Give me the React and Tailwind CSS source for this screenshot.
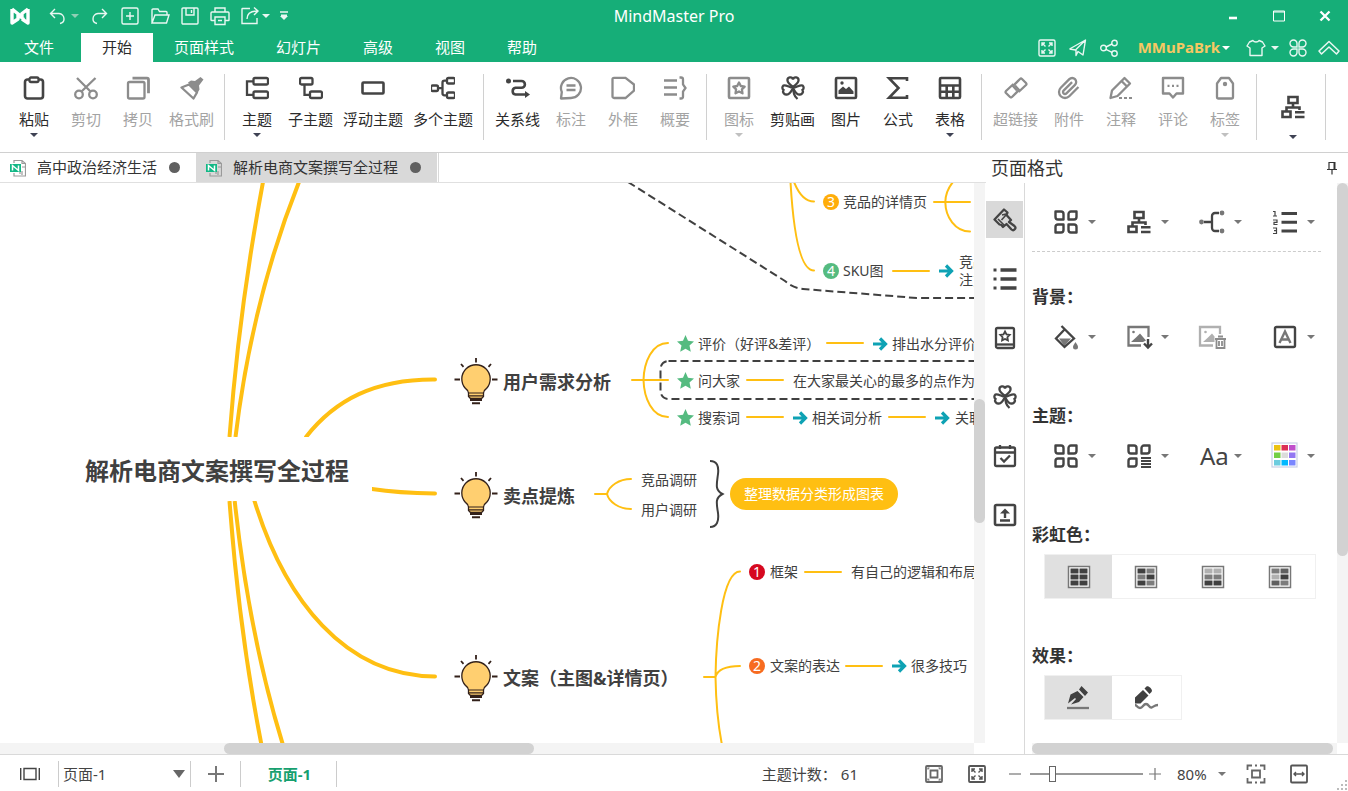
import React, { useState } from "react";

const Svg = ({ w = 24, h = 24, sw = 2.3, className = "", children }) => (
  <svg
    width={w}
    height={h}
    viewBox={`0 0 ${w} ${h}`}
    fill="none"
    stroke="currentColor"
    strokeWidth={sw}
    className={`shrink-0 ${className}`}
    aria-hidden="true"
  >
    {children}
  </svg>
);

const Caret = ({ className = "" }) => (
  <svg width="8" height="4" viewBox="0 0 8 4" className={`shrink-0 ${className}`} aria-hidden="true">
    <path d="M0 0h8L4 4z" fill="currentColor" />
  </svg>
);

const CLOVER = (
  <>
    <path d="M12 11C8 8 6.500 6.500 6.500 4.500A2.800 2.800 0 0 1 12 3.500A2.800 2.800 0 0 1 17.500 4.500C17.500 6.500 16 8 12 11Z" />
    <path d="M12 12C8 11 4.500 8.500 2.500 9.500A2.800 2.800 0 0 0 2.500 14A3 3 0 0 0 5.500 18.500C8 19 10 16 12 12Z" />
    <path d="M12 12C16 11 19.500 8.500 21.500 9.500A2.800 2.800 0 0 1 21.500 14A3 3 0 0 1 18.500 18.500C16 19 14 16 12 12Z" />
    <path d="M12 11C12.500 17 13 20 16.500 23" />
  </>
);

const STAR = "M12 7.500l1.500 2.900 3.200.500-2.300 2.300.500 3.200-2.900-1.500-2.900 1.500.500-3.200-2.300-2.300 3.200-.500z";

const PETALS = (
  <g strokeLinejoin="round" strokeWidth="2.400">
    <path d="M1.500 1.500h5.500a2.500 2.500 0 0 1 2.500 2.500v5.500h-5.500a2.500 2.500 0 0 1-2.500-2.500z" />
    <path d="M22.500 1.500h-5.500a2.500 2.500 0 0 0-2.500 2.500v5.500h5.500a2.500 2.500 0 0 0 2.500-2.500z" />
    <path d="M1.500 22.500h5.500a2.500 2.500 0 0 0 2.500-2.500v-5.500h-5.500a2.500 2.500 0 0 0-2.500 2.500z" />
  </g>
);

const FOUR_PETALS = (
  <>
    {PETALS}
    <path
      d="M22.500 22.500h-5.500a2.500 2.500 0 0 1-2.500-2.500v-5.500h5.500a2.500 2.500 0 0 1 2.500 2.500z"
      strokeLinejoin="round"
      strokeWidth="2.400"
    />
  </>
);

const LAYOUT = (
  <path
    d="M7.500 2h9v6h-9zM12 8v4M5.500 16v-3.500h13V15M1.500 16.500h8v5.500h-8zM14 17.300h9.500M14 22h9.500"
    strokeWidth="2.600"
  />
);

const icons = {
  paste: (
    <>
      <rect x="3" y="3.500" width="18" height="19" rx="2.500" strokeWidth="2.600" />
      <rect x="7.500" y="1.500" width="9" height="4.500" rx="1.500" fill="white" />
    </>
  ),
  cut: (
    <>
      <circle cx="5" cy="18.500" r="3.800" />
      <circle cx="19" cy="18.500" r="3.800" />
      <path d="M3 2l13.500 13.500M21.500 2L7.500 15.500" />
    </>
  ),
  copy: (
    <>
      <rect x="2" y="6" width="16.500" height="16.500" rx="1.500" />
      <path d="M6.500 2.200H21a1.500 1.500 0 0 1 1.500 1.500v13.500" strokeWidth="2.800" />
    </>
  ),
  painter: (
    <>
      <path d="M9 8.500l8 8-3.500 6L1.500 11.500z" strokeLinejoin="round" />
      <path d="M8 6.500l3-2 4 .500 5.500-4 3 2.500-4.500 6 .5 4-2 3.500z" fill="currentColor" stroke="none" />
    </>
  ),
  topic: (
    <>
      <rect x="8.500" y="2" width="14.500" height="6.500" rx="1.500" />
      <rect x="8.500" y="15.500" width="14.500" height="6.500" rx="1.500" />
      <path d="M8.500 5.300H2v13.500h6.500" />
    </>
  ),
  subtopic: (
    <>
      <rect x="1" y="2" width="12.500" height="6.500" rx="1.500" />
      <rect x="11" y="15.500" width="12" height="6.500" rx="1.500" />
      <path d="M5.500 8.500v10.300H11" />
    </>
  ),
  floating: <rect x="1.500" y="6.500" width="21" height="11" rx="1" strokeWidth="2.600" />,
  multi: (
    <>
      <rect x="0" y="9.500" width="7" height="5.500" rx="1.500" />
      <rect x="16" y="2" width="8" height="5.500" rx="1.500" />
      <rect x="16" y="16.500" width="8" height="5.500" rx="1.500" />
      <path d="M7 12.200h4.500M16 4.700h-2.500a2 2 0 0 0-2 2v10.600a2 2 0 0 0 2 2H16" />
    </>
  ),
  relation: (
    <>
      <circle cx="2.500" cy="5" r="2.500" fill="currentColor" stroke="none" />
      <path d="M7 5h8.500a3.200 3.200 0 0 1 0 6.800H9.500a3.400 3.400 0 0 0 0 6.700H19" strokeWidth="2.600" />
      <path d="M19 15l5 3.500-5 3.500z" fill="currentColor" stroke="none" />
    </>
  ),
  callout: (
    <>
      <path d="M2 22.500l.800-6.500A10 10 0 1 1 12 22z" strokeLinejoin="round" />
      <path d="M7.500 9.500h9M7.500 14h9" />
    </>
  ),
  boundary: <path d="M3 1.800h11.500L23 8.500v6L14.500 22H3a1.500 1.500 0 0 1-1.500-1.500v-17A1.500 1.500 0 0 1 3 1.800z" />,
  summary: (
    <>
      <path d="M1 4.500h13M1 11.500h13M1 18.500h13" />
      <path d="M16.500 1.500h1.500a2 2 0 0 1 2 2v5l2.500 3.500-2.500 3.500v5a2 2 0 0 1-2 2h-1.500" />
    </>
  ),
  mark: (
    <>
      <rect x="2" y="2" width="20" height="20" rx="1" strokeWidth="2.600" />
      <path d="M12 6.500l1.800 3.500 3.900.600-2.800 2.800.600 3.900L12 15.500l-3.500 1.800.600-3.900-2.800-2.800 3.900-.600z" strokeLinejoin="round" />
    </>
  ),
  clipart: CLOVER,
  image: (
    <>
      <rect x="2" y="2" width="20" height="20" rx="1" strokeWidth="2.600" />
      <path d="M4.500 18v-3.500l4.500-4 3 2.500 3-2.500 4.500 5V18z" fill="currentColor" stroke="none" />
      <circle cx="8" cy="7" r="1.700" fill="currentColor" stroke="none" />
    </>
  ),
  formula: <path d="M21 5V2.200H3L12.500 12 3 21.800h18V19" strokeWidth="2.600" />,
  table: (
    <path d="M3 2h18a1 1 0 0 1 1 1v18a1 1 0 0 1-1 1H3a1 1 0 0 1-1-1V3a1 1 0 0 1 1-1zM2 9.500h20M2 15.700h20M8.700 9.500V22M15.300 9.500V22" strokeWidth="2.600" />
  ),
  link: (
    <>
      <path d="M14.500 16l7.500-7a1.500 1.500 0 0 0 0-2l-4-4a1.500 1.500 0 0 0-2 0L9 10l4 4.500" />
      <path d="M9.500 8L2 15a1.500 1.500 0 0 0 0 2l4 4a1.500 1.500 0 0 0 2 0l7-7-4-4.500" />
    </>
  ),
  attach: (
    <path d="M21.440 11.050l-9.190 9.190a6 6 0 0 1-8.490-8.490l8.570-8.570A4 4 0 1 1 18 8.840l-8.590 8.570a2 2 0 0 1-2.830-2.830l8.490-8.480" />
  ),
  note: (
    <>
      <path d="M1.500 22l1.500-7.500L15.500 2l5.500 5.500L8.500 20z" strokeLinejoin="round" />
      <path d="M12.500 5l5.500 5.500" />
      <path d="M10 22h3M15 22h3M20 22h3" strokeWidth="2.200" />
    </>
  ),
  comment: (
    <>
      <path d="M2 2h20v15.500h-6.500L12 21.500l-3.500-4H2z" strokeLinejoin="round" strokeWidth="2.400" />
      <path d="M6.500 9.800h2M11 9.800h2M15.500 9.800h2" strokeWidth="2.200" />
    </>
  ),
  tag: (
    <>
      <path d="M4 7.500L8 2h8l4 5.500V21a1.500 1.500 0 0 1-1.500 1.500h-13A1.500 1.500 0 0 1 4 21z" strokeLinejoin="round" />
      <circle cx="12" cy="8" r="2.200" fill="currentColor" stroke="none" />
    </>
  ),
};

const ribbonGroups = [
  [
    { label: "粘贴", icon: "paste", caret: true },
    { label: "剪切", icon: "cut", off: true },
    { label: "拷贝", icon: "copy", off: true },
    { label: "格式刷", icon: "painter", off: true },
  ],
  [
    { label: "主题", icon: "topic", caret: true },
    { label: "子主题", icon: "subtopic" },
    { label: "浮动主题", icon: "floating" },
    { label: "多个主题", icon: "multi" },
  ],
  [
    { label: "关系线", icon: "relation" },
    { label: "标注", icon: "callout", off: true },
    { label: "外框", icon: "boundary", off: true },
    { label: "概要", icon: "summary", off: true },
  ],
  [
    { label: "图标", icon: "mark", caret: true, off: true },
    { label: "剪贴画", icon: "clipart" },
    { label: "图片", icon: "image" },
    { label: "公式", icon: "formula" },
    { label: "表格", icon: "table", caret: true },
  ],
  [
    { label: "超链接", icon: "link", off: true },
    { label: "附件", icon: "attach", off: true },
    { label: "注释", icon: "note", off: true },
    { label: "评论", icon: "comment", off: true },
    { label: "标签", icon: "tag", caret: true, off: true },
  ],
];

const cellWidth = { 2: "w-[52px]", 3: "w-[55px]", 4: "w-[70px]" };

const RibbonButton = ({ label, icon, caret, off }) => (
  <button
    disabled={off}
    className={`flex flex-col items-center pt-[14px] ${cellWidth[label.length]} ${
      off ? "text-[#8c8c8c]" : "text-[#444]"
    }`}
  >
    <Svg>{icons[icon]}</Svg>
    <span className={`mt-[9px] text-[15px] leading-5 whitespace-nowrap ${off ? "text-[#a3a3a3]" : "text-[#2b2b2b]"}`}>
      {label}
    </span>
    {caret && <Caret className={`mt-1 ${off ? "text-[#c0c0c0]" : "text-[#3f4254]"}`} />}
  </button>
);

const quickActions = [
  { name: "重做", art: <path d="M16 7.500H8a5.500 5.500 0 0 0-5 5.500c0 2 1.500 4 4 4.500M12 3l4.500 4.500L12 12" /> },
  { name: "新建", art: <path d="M3.500 2h13A1.500 1.500 0 0 1 18 3.500v13a1.500 1.500 0 0 1-1.500 1.500h-13A1.500 1.500 0 0 1 2 16.500v-13A1.500 1.500 0 0 1 3.500 2zM10 6v8M6 10h8" /> },
  { name: "打开", art: <path d="M2 17V4a1 1 0 0 1 1-1h5l1.500 2.500H16a1 1 0 0 1 1 1V9M2 17l3-8h14l-2.500 8z" /> },
  { name: "保存", art: <path d="M3 2h14a1 1 0 0 1 1 1v14a1 1 0 0 1-1 1H3a1 1 0 0 1-1-1V3a1 1 0 0 1 1-1zM6 2v7h8V2M11.500 4v3" /> },
  { name: "打印", art: <path d="M5 6V2h10v4M5 14.500H1.500A.500.500 0 0 1 1 14V7a1 1 0 0 1 1-1h16a1 1 0 0 1 1 1v7a.500.500 0 0 1-.500.500H15M5 11h10v7.500H5zM8 14.500h4" /> },
  { name: "分享", art: <path d="M10 2.500H2.500A.500.500 0 0 0 2 3v14.500h15V12M7 13c0-5 3-8 10.500-8M14 1.500L18 5l-4 4" /> },
];

const TitleBar = () => (
  <div className="grid h-8 grid-cols-[1fr_auto_1fr] items-center">
    <div className="flex items-center text-white/90">
      <svg width="22" height="20" viewBox="0 0 22 20" className="ml-[9px]" aria-hidden="true">
        <path d="M3 3v14l6-4V8.500l6 5M19 3v14l-6-4M3 3l10 8M19 3l-6 4.500v4" fill="none" stroke="white" strokeWidth="3.400" strokeLinejoin="round" />
      </svg>
      <button aria-label="撤销" className="ml-4 flex h-[30px] w-5 items-center justify-center">
        <Svg w={20} h={20} sw={1.4}>
          <path d="M4 7.500h8a5.500 5.500 0 0 1 5 5.500c0 2-1.500 4-4 4.500M8 3L3.500 7.500 8 12" />
        </Svg>
      </button>
      <Caret className="ml-1 text-[#8fcfb5]" />
      <div className="ml-1.5 flex">
        {quickActions.map((a) => (
          <button key={a.name} aria-label={a.name} className="flex h-[30px] w-[30px] items-center justify-center">
            <Svg w={20} h={20} sw={1.4}>
              {a.art}
            </Svg>
          </button>
        ))}
      </div>
      <Caret className="-ml-[3px]" />
      <button aria-label="自定义" className="ml-2.5 flex h-5 w-2 items-center">
        <Svg w={8} h={10}>
          <path d="M0 1h8M1 4.200h6" strokeWidth="1.400" />
          <path d="M0 5h8L4 9z" fill="currentColor" stroke="none" />
        </Svg>
      </button>
    </div>
    <h1 className="text-base text-white">MindMaster Pro</h1>
    <div className="flex justify-end text-white">
      <button aria-label="最小化" className="flex h-7 w-[46px] items-center justify-center">
        <Svg w={12} h={12} sw={2.6}>
          <path d="M2 8h8" />
        </Svg>
      </button>
      <button aria-label="最大化" className="flex h-7 w-[46px] items-center justify-center">
        <Svg w={12} h={12} sw={1}>
          <path d="M.500 1h11v10H.500zM.500 2h11" />
        </Svg>
      </button>
      <button aria-label="关闭" className="flex h-7 w-[46px] items-center justify-center">
        <Svg w={12} h={12}>
          <path d="M1.500 1.500l9 9M10.500 1.500l-9 9" />
        </Svg>
      </button>
    </div>
  </div>
);

const menus = ["文件", "开始", "页面样式", "幻灯片", "高级", "视图", "帮助"];

const MenuBar = ({ active, setActive }) => (
  <nav className="flex h-[30px] items-end pl-[3px]">
    {menus.map((m) => (
      <button
        key={m}
        onClick={() => setActive(m)}
        className={`h-[29px] px-[21px] text-[15px] leading-[29px] ${m === "文件" ? "mr-1.5" : ""} ${
          m === active ? "bg-white text-[#2b2b2b]" : "text-white"
        }`}
      >
        {m}
      </button>
    ))}
    <div className="ml-auto flex h-[29px] items-center pr-2 text-white/90">
      <button aria-label="全屏" className="w-[31px]">
        <Svg w={20} h={20} sw={1.4}>
          <rect x="2" y="2" width="16" height="16" rx="1.500" />
          <path d="M5 8V5h3M5 5l3.500 3.500M12 5h3v3M15 5l-3.500 3.500M5 12v3h3M5 15l3.500-3.500M12 15h3v-3M15 15l-3.500-3.500" />
        </Svg>
      </button>
      <button aria-label="发送" className="w-[31px]">
        <Svg w={20} h={20} sw={1.4}>
          <path d="M1.500 11L17.500 2l-2.500 15-5-3.500L8 17.500v-6L17 2.500M1.500 11l6 1" strokeLinejoin="round" />
        </Svg>
      </button>
      <button aria-label="共享" className="w-[39px]">
        <Svg w={20} h={20} sw={1.4}>
          <circle cx="4.500" cy="10" r="2.800" />
          <circle cx="15.500" cy="5" r="2.700" />
          <circle cx="15.500" cy="15.500" r="2.700" />
          <path d="M7 9l6-3M7 11.300l6 3" />
        </Svg>
      </button>
      <button className="flex items-center gap-0.5 text-[15px] font-bold text-[#f7c862]">
        MMuPaBrk
        <Caret className="text-white" />
      </button>
      <button aria-label="皮肤" className="ml-4 flex items-center gap-[5px]">
        <Svg w={20} h={20} sw={1.4}>
          <path d="M7 2.500c1 2 5 2 6 0l3.500 1.500L19 8l-3 2v7.500H4V10L1 8l2.500-4z" strokeLinejoin="round" />
        </Svg>
        <Caret />
      </button>
      <button aria-label="应用" className="ml-[9px]">
        <Svg w={20} h={20} sw={1.4}>
          <path d="M9 9V5.500A3.500 3.500 0 1 0 5.500 9zM11 9V5.500A3.500 3.500 0 1 1 14.500 9zM9 11v3.500A3.500 3.500 0 1 1 5.500 11zM11 11v3.500a3.500 3.500 0 1 0 3.500-3.500z" />
        </Svg>
      </button>
      <button aria-label="收起" className="ml-2.5">
        <Svg w={22} h={20} sw={1.5}>
          <path d="M11 3.500l10 9.500-2.500 3-7.500-7-7.500 7L1 13z" strokeLinejoin="round" />
        </Svg>
      </button>
    </div>
  </nav>
);

const Ribbon = () => (
  <div className="flex h-[91px] border-b border-[#d0d0d0] bg-white pl-0.5">
    {ribbonGroups.map((group, i) => (
      <div key={i} className="flex">
        <div className="flex pr-[5px] pl-1.5">
          {group.map((b) => (
            <RibbonButton key={b.label} {...b} />
          ))}
        </div>
        <div className="my-3 w-px bg-[#d0d0d0]" />
      </div>
    ))}
    <button aria-label="布局" className="flex w-[68px] flex-col items-center pt-[33px] pl-1 text-[#444]">
      <Svg>{LAYOUT}</Svg>
      <Caret className="mt-4 text-[#3f4254]" />
    </button>
    <div className="my-3 w-px bg-[#d0d0d0]" />
  </div>
);

const DocTab = ({ title, active }) => (
  <button className={`flex h-full items-center pr-4 pl-2.5 text-[15px] text-[#333] ${active ? "bg-[#d9d9d9]" : "bg-white"}`}>
    <svg width="16" height="18" viewBox="0 0 16 18" className="shrink-0" aria-hidden="true">
      <path d="M4 4V1.500h8l3.500 3V17H4v-3M12 1.500v3h3.500M8 12h2v3M12 8h3M12 12v4" fill="none" stroke="#9a9a9a" strokeWidth="1.200" />
      <rect x="0" y="5" width="11" height="8" fill="#12b886" />
      <path d="M2.500 11.500v-5l6 5v-5" fill="none" stroke="white" strokeWidth="1.500" />
    </svg>
    <span className="ml-[11px] whitespace-nowrap">{title}</span>
    <span className="ml-3 h-[11px] w-[11px] rounded-full bg-[#606060]" />
  </button>
);

const Bulb = ({ y }) => (
  <g transform={`translate(476 ${y})`} stroke="#33211a">
    <path
      d="M-7.500 13.500C-7.500 11-8.500 10.500-10.500 9A14.200 14.200 0 1 1 10.500 9C8.500 10.500 7.500 11 7.500 13.500V17L5.500 19h-11L-7.500 17z"
      fill="#ffcf70"
      strokeWidth="1.300"
    />
    <path d="M-7.500 13.500h15M-7.500 16.300h15" strokeWidth="1.200" />
    <path d="M-6 20.500h12M-4 23.800h8" strokeWidth="2" />
    <path d="M0-21.500v4.500M-21.500 0h5.500M16 0h5.500M-15-15.500l2.500 2.800M15-15.500l-2.500 2.800" strokeWidth="1.800" />
  </g>
);

const topics = [
  { text: "竞品的详情页", x: 843, y: 202 },
  { text: "SKU图", x: 843, y: 271 },
  { text: "竞品", x: 959, y: 262 },
  { text: "注意", x: 959, y: 280 },
  { text: "评价（好评&差评）", x: 698, y: 344 },
  { text: "排出水分评价", x: 892, y: 344 },
  { text: "问大家", x: 698, y: 381 },
  { text: "在大家最关心的最多的点作为卖点", x: 793, y: 381 },
  { text: "搜索词", x: 698, y: 418 },
  { text: "相关词分析", x: 812, y: 418 },
  { text: "关联词", x: 955, y: 418 },
  { text: "竞品调研", x: 641, y: 480 },
  { text: "用户调研", x: 641, y: 510 },
  { text: "框架", x: 770, y: 572 },
  { text: "有自己的逻辑和布局", x: 851, y: 572 },
  { text: "文案的表达", x: 770, y: 666 },
  { text: "很多技巧", x: 911, y: 666 },
];

const mainTopics = [
  { text: "用户需求分析", x: 503, y: 382 },
  { text: "卖点提炼", x: 503, y: 496 },
  { text: "文案（主图&详情页）", x: 503, y: 678 },
];

const badges = [
  { n: 3, x: 823, y: 194, color: "bg-[#ffad0a]" },
  { n: 4, x: 823, y: 263, color: "bg-[#55bb80]" },
  { n: 1, x: 749, y: 564, color: "bg-[#d6081f]" },
  { n: 2, x: 749, y: 658, color: "bg-[#f76b20]" },
];

const arrows = [
  [938, 271],
  [872, 344],
  [792, 418],
  [934, 418],
  [891, 666],
];

const TOP = 183;

const MindMap = () => (
  <main className="relative min-w-0 flex-1 overflow-hidden bg-white text-[#404040]">
    <svg width="1400" height="900" viewBox="0 183 1400 900" fill="none" className="absolute top-0 left-0 max-w-none" aria-hidden="true">
      <g stroke="#ffbf12" strokeWidth="4" strokeLinecap="butt">
        <path d="M263 182Q239 310 229.500 437M299 182Q252 300 235.500 437" />
        <path d="M306 437C335 400 375 379 435 379.500" strokeLinecap="round" />
        <path d="M372 489Q398 493 435 493.500" strokeLinecap="round" />
        <path d="M254.500 501C285 600 345 676 435 676.500" strokeLinecap="round" />
        <path d="M229.500 501Q239 630 261.500 745M234.700 501Q249 635 283 745" />
      </g>
      <path d="M0 437h372v64H0z" fill="white" />
      <g stroke="#ffbf12" strokeWidth="2" strokeLinecap="round">
        <path d="M790.500 182C793 225 799 270.500 814 270.500M794 182C798 192 804 201.500 814 201.500" />
        <path d="M934 202h36M953 182C948 188 945.500 194 945.300 202C945.500 217 955 231.500 970 231.500" />
        <path d="M632 380h36M668 343C652 343 644 362 643.500 380C644 398 652 417 668 417" />
        <path d="M595 494h12M631 479C619 479 609 486 607 494C609 502 619 509 631 509" />
        <path d="M704 677h11M740 571.500C722 571.500 716 640 715.500 677C716 705 718 725 722 745M715.500 677C718 668 728 666 740 666" />
        <path d="M893 271h36M827 343h36M747 380h36M747 417h36M889 417h36M805 572h36M846 666h36" />
      </g>
      <g stroke="#404040" strokeWidth="2">
        <path d="M628 182L785 281Q793 288 803 289L905 297Q912 298 920 298H1400" strokeDasharray="8 4" />
        <rect x="660.500" y="361" width="700" height="38" rx="8" strokeDasharray="8 4" />
        <path d="M710 461C717 461 719 466 718 474C716.500 485 715 490 722.500 494C715 498 716.500 503 718 513C719 521 717 527 710 527" />
      </g>
      {[343.5, 380.5, 417.5].map((y) => (
        <path
          key={y}
          transform={`translate(685.500 ${y})`}
          d="M0-8.500l2.500 5.700 6 .700-4.500 4.100 1.300 6.200L0 5.200l-5.300 3 1.300-6.200-4.500-4.100 6-.700z"
          fill="#55bb80"
        />
      ))}
      {arrows.map(([x, y]) => (
        <path key={`${x}-${y}`} transform={`translate(${x} ${y})`} d="M1 0h12M8-5.500L13.500 0 8 5.500" stroke="#0ea2b4" strokeWidth="3.200" />
      ))}
      <Bulb y={379.5} />
      <Bulb y={493.5} />
      <Bulb y={676.5} />
    </svg>

    <h2 className="absolute text-2xl leading-8 font-bold whitespace-nowrap" style={{ left: 85, top: 471 - TOP - 16 }}>
      解析电商文案撰写全过程
    </h2>
    {mainTopics.map((t) => (
      <h3 key={t.text} className="absolute text-lg leading-6 font-bold whitespace-nowrap" style={{ left: t.x, top: t.y - TOP - 12 }}>
        {t.text}
      </h3>
    ))}
    {topics.map((t) => (
      <p key={t.text} className="absolute text-sm leading-5 whitespace-nowrap" style={{ left: t.x, top: t.y - TOP - 10 }}>
        {t.text}
      </p>
    ))}
    {badges.map((b) => (
      <span
        key={b.n}
        className={`absolute h-4 w-4 rounded-full text-center text-sm leading-4 text-white ${b.color}`}
        style={{ left: b.x, top: b.y - TOP }}
      >
        {b.n}
      </span>
    ))}
    <div
      className="absolute rounded-full bg-[#ffbf12] px-3.5 text-sm leading-8 whitespace-nowrap text-white"
      style={{ left: 730, top: 478 - TOP }}
    >
      整理数据分类形成图表
    </div>
  </main>
);

const sideTabs = [
  {
    name: "页面格式",
    art: (
      <>
        <path d="M1.500 11.500L11 1.500l3.500 3-1 2.500 4.500 5-2 2 5.500 4a2 2 0 0 1-3 3.500l-5-5.500-3.500 3-1.500-2-2-.500z" strokeLinejoin="round" />
        <path d="M5 11l6.500 6.500M9 7l4-1M8.500 12l4.500-5" strokeWidth="1.600" />
      </>
    ),
  },
  {
    name: "大纲",
    art: (
      <>
        <path d="M7.500 3h16M7.500 12h16M7.500 21h16" strokeWidth="3.400" />
        <path d="M.500 3h3M.500 12h3M.500 21h3" strokeWidth="3" />
      </>
    ),
  },
  {
    name: "图标",
    art: (
      <>
        <rect x="3" y="2" width="18" height="20" rx="1.500" />
        <path d="M3 18.500h18" />
        <path d={STAR} transform="translate(0 -2)" strokeWidth="1.800" />
      </>
    ),
  },
  { name: "剪贴画", art: CLOVER },
  {
    name: "任务",
    art: <path d="M3.500 3.500h17A1.500 1.500 0 0 1 22 5v15.500a1.500 1.500 0 0 1-1.500 1.500h-17A1.500 1.500 0 0 1 2 20.500V5a1.500 1.500 0 0 1 1.500-1.500zM2 8.500h20M7 1v4M17 1v4M7.500 14l3.500 3.500 6-6" />,
  },
  {
    name: "导出",
    art: (
      <>
        <rect x="2" y="2" width="20" height="20" rx="1.500" strokeWidth="2.600" />
        <path d="M7 17.500h10M12 15V9" strokeWidth="2.400" />
        <path d="M12 5.500l5 5H7z" fill="currentColor" stroke="none" />
      </>
    ),
  },
];

const FORMAT_ROWS = {
  structure: [
    { name: "布局", art: FOUR_PETALS },
    { name: "结构", art: LAYOUT },
    {
      name: "连线",
      art: (
        <>
          <path d="M4 12h8M19 3h-4a3 3 0 0 0-3 3v12a3 3 0 0 0 3 3h4" />
          <g fill="#777" stroke="none">
            <circle cx="1.500" cy="12" r="2.400" />
            <circle cx="22" cy="3" r="2.400" />
            <circle cx="22" cy="21" r="2.400" />
          </g>
        </>
      ),
    },
    {
      name: "编号",
      art: (
        <>
          <path d="M8.500 3.500H24M8.500 12.300H24M8.500 21H24" strokeWidth="3" />
          <path d="M0 1.500h2v5M0 6h4M0 10h4v2.300H1v2.200h3.500M0 18h3.500v5.500H0M1 20.700h2.500" strokeWidth="1.200" />
        </>
      ),
    },
  ],
  background: [
    {
      name: "填充",
      art: (
        <>
          <path d="M5 13.500h12l-6.500 7.500z" fill="#777" stroke="none" />
          <path d="M7.500 1l12.500 12.500L10.500 22 2 13.500l9-9.500" />
          <path d="M21.500 17c2 3 2.500 4 2.500 5a2.400 2.400 0 0 1-5 0c0-1 .5-2 2.500-5z" fill="#777" stroke="none" />
        </>
      ),
    },
    {
      name: "插入图片",
      art: (
        <>
          <path d="M21.500 12V2H1.500v18.500H14" stroke="#777" />
          <path d="M4 17l5-4.500 4-4 6 7-3 1.500z" fill="#777" stroke="none" />
          <circle cx="6.500" cy="7" r="1.300" fill="#777" stroke="none" />
          <path d="M21 14v8M17 18.500l4 4 4-4" strokeWidth="2.400" />
        </>
      ),
    },
    {
      name: "删除图片",
      off: true,
      art: (
        <>
          <path d="M20 9V2H0v18.500h13" stroke="#b0b0b0" />
          <path d="M3 17l5-4.500 4-4 2.500 3V17z" fill="#b0b0b0" stroke="none" />
          <circle cx="5.500" cy="7" r="1.300" fill="#b0b0b0" stroke="none" />
          <path d="M15 14h11M18 11.500h5M16.500 14v9h8v-9M19 16v5M22 16v5" stroke="#8c8c8c" strokeWidth="1.800" />
        </>
      ),
    },
    {
      name: "水印",
      art: (
        <>
          <rect x="2" y="2" width="20" height="20" rx="1.500" strokeWidth="2.400" />
          <path d="M6.500 18L12 6.500 17.500 18M9 14.500h6" stroke="#777" strokeWidth="2.400" />
        </>
      ),
    },
  ],
  theme: [
    { name: "主题样式", art: FOUR_PETALS },
    { name: "样式列表", art: <>{PETALS}<path d="M14 14h10M14 17h10M14 20h10M14 23h10" strokeWidth="1.800" /></> },
    { name: "字体", text: "Aa" },
    {
      name: "颜色",
      art: (
        <>
          <rect x="-1" y="-1" width="25" height="24" fill="white" stroke="#c9cfe6" strokeWidth="1.200" />
          <g stroke="none">
            <path d="M1 1h6.500v5.500H1z" fill="#ecc212" />
            <path d="M8.500 1H15v5.500H8.500z" fill="#dc2f55" />
            <path d="M16 1h6.500v5.500H16z" fill="#c04fcb" />
            <path d="M1 8.500h6.500V14H1z" fill="#73cf45" />
            <path d="M8.500 8.500H15V14H8.500z" fill="#dcdcdc" />
            <path d="M16 8.500h6.500V14H16z" fill="#9277f2" />
            <path d="M1 16h6.500v5.500H1z" fill="#6dccdf" />
            <path d="M8.500 16H15v5.500H8.500z" fill="#00b8ff" />
            <path d="M16 16h6.500v5.500H16z" fill="#7a86ff" />
          </g>
        </>
      ),
    },
  ],
};

const FormatRow = ({ items }) => (
  <div className="flex h-6 pl-[29px]">
    {items.map((item) => (
      <button
        key={item.name}
        aria-label={item.name}
        disabled={item.off}
        className="flex w-[73px] shrink-0 items-center gap-2.5 text-[#444]"
      >
        {item.text ? (
          <span className="w-6 text-[24px] leading-6">{item.text}</span>
        ) : (
          <Svg className="overflow-visible">{item.art}</Svg>
        )}
        {!item.off && <Caret className="text-[#777]" />}
      </button>
    ))}
  </div>
);

const D = "#404040";
const M = "#7c7c7c";
const L = "#b0b0b0";
const rainbows = [
  { name: "单色", cells: [D, D, D, D, D, D] },
  { name: "交替", cells: [D, M, M, D, D, M] },
  { name: "渐变", cells: [L, L, M, M, D, D] },
  { name: "随机", cells: [M, "#606060", L, D, "#606060", M] },
];

const Segment = ({ items, value, onChange }) => (
  <div className="ml-[19px] flex h-[45px] w-fit border border-[#f0f0f0] pr-0.5">
    {items.map((it) => (
      <button
        key={it.name}
        aria-label={it.name}
        onClick={() => onChange(it.name)}
        className={`flex w-[67px] items-center justify-center text-[#404040] ${value === it.name ? "bg-[#e0e0e0]" : ""}`}
      >
        <Svg>{it.art}</Svg>
      </button>
    ))}
  </div>
);

const rainbowItems = rainbows.map((r) => ({
  name: r.name,
  art: (
    <>
      <rect x="1.500" y="1.500" width="21" height="21" fill="white" stroke="#777" strokeWidth="1.500" />
      {r.cells.map((c, i) => (
        <rect key={i} x={i % 2 ? 12.5 : 3.5} y={3.5 + Math.floor(i / 2) * 6} width="8" height="5" fill={c} stroke="none" />
      ))}
    </>
  ),
}));

const effectItems = [
  {
    name: "直线",
    art: (
      <>
        <path d="M1 17.500l2.500-9L10.500 5l6 6-4.500 5L4 18.500l5-5.500-1-1zM12 3.500L14.500 0l6.500 6.500-3 3.500z" fill="currentColor" stroke="none" />
        <path d="M0 22h22" stroke="#777" />
      </>
    ),
  },
  {
    name: "手绘",
    art: (
      <>
        <path d="M1 17.500v-6L9 4l5.500 5.500-8 8zM10.500 2.500l2-2C14.500-1 19.500 4 17.500 6l-2 2z" fill="currentColor" stroke="none" />
        <path d="M1 19c2 0 2 3 5 3s3-4 6-4 3 4 5.500 3.500S20 19 24 19" stroke="#777" />
      </>
    ),
  },
];

const SectionLabel = ({ children }) => (
  <h3 className="pl-[7px] text-[17px] leading-6 font-bold text-[#333]">{children}</h3>
);

const FormatPanel = () => {
  const [tab, setTab] = useState("页面格式");
  const [rainbow, setRainbow] = useState("单色");
  const [effect, setEffect] = useState("直线");

  return (
    <aside className="flex w-[362px] shrink-0 flex-col bg-white">
      <div className="flex h-[30px] items-center justify-between pr-2.5 pl-[5px]">
        <h2 className="text-lg leading-7 text-[#333]">页面格式</h2>
        <button aria-label="固定" className="text-[#333]">
          <Svg w={12} h={14} sw={1.2}>
            <path d="M3 1v7.500M3 1.500h6M1 8.500h10M6 9v4.500" />
            <path d="M8.500 1v7.500" strokeWidth="2" />
          </Svg>
        </button>
      </div>
      <div className="flex min-h-0 flex-1">
        <div className="flex w-[39px] flex-col gap-[22px] border-r border-[#d9d9d9] pt-[18px]">
          {sideTabs.map((s) => (
            <button
              key={s.name}
              aria-label={s.name}
              onClick={() => setTab(s.name)}
              className={`flex h-[37px] w-[37px] items-center justify-center text-[#444] ${tab === s.name ? "bg-[#d9d9d9]" : ""}`}
            >
              <Svg>{s.art}</Svg>
            </button>
          ))}
        </div>
        <div className="flex min-w-0 flex-1 flex-col">
          <div className="flex min-h-0 flex-1">
            <div className="min-w-0 flex-1 overflow-hidden pt-[27px]">
              <FormatRow items={FORMAT_ROWS.structure} />
              <div className="mt-[17px] mr-4 ml-[7px] border-t border-dashed border-[#ccc]" />
              <div className="mt-[33px]">
                <SectionLabel>背景：</SectionLabel>
              </div>
              <div className="mt-4">
                <FormatRow items={FORMAT_ROWS.background} />
              </div>
              <div className="mt-[55px]">
                <SectionLabel>主题：</SectionLabel>
              </div>
              <div className="mt-4">
                <FormatRow items={FORMAT_ROWS.theme} />
              </div>
              <div className="mt-[55px] flex flex-col gap-[7px]">
                <SectionLabel>彩虹色：</SectionLabel>
                <Segment items={rainbowItems} value={rainbow} onChange={setRainbow} />
              </div>
              <div className="mt-[45px] flex flex-col gap-[7px]">
                <SectionLabel>效果：</SectionLabel>
                <Segment items={effectItems} value={effect} onChange={setEffect} />
              </div>
            </div>
            <div className="w-[11px] bg-[#f4f4f4]">
              <div className="h-2/3 rounded-full bg-[#d2d2d2]" />
            </div>
          </div>
          <div className="mr-[11px] ml-[7px] h-[11px] bg-[#f4f4f4] pr-1">
            <div className="h-full rounded-full bg-[#d2d2d2]" />
          </div>
        </div>
      </div>
    </aside>
  );
};

const Divider = () => <div className="h-[26px] w-px bg-[#ccc]" />;

const StatusBar = () => {
  const [zoom, setZoom] = useState(80);

  return (
    <footer className="relative flex h-[37px] shrink-0 items-center border-t border-[#d9d9d9] bg-white pt-0.5 text-[15px] text-[#444]">
      <button aria-label="页面视图" className="mr-[18px] ml-5">
        <Svg w={20} h={14} sw={1.4}>
          <path d="M.700 1v12M19.300 1v12M4 1.500h12v11H4z" />
        </Svg>
      </button>
      <Divider />
      <label className="relative flex w-[131px] items-center">
        <span className="sr-only">页面</span>
        <select className="w-full appearance-none bg-transparent pl-1 text-[15px] outline-none">
          <option>页面-1</option>
        </select>
        <svg width="12" height="8" viewBox="0 0 12 8" className="pointer-events-none absolute right-[5px]" aria-hidden="true">
          <path d="M0 0h12L6 8z" fill="#666" />
        </svg>
      </label>
      <Divider />
      <button aria-label="添加页面" className="flex w-[49px] justify-center text-[#777]">
        <Svg w={16} h={16} sw={2}>
          <path d="M8 0v16M0 8h16" />
        </Svg>
      </button>
      <Divider />
      <button className="w-[95px] pl-0.5 font-bold text-[#17a06f]">页面-1</button>
      <Divider />

      <p className="ml-auto flex gap-1">
        <span>主题计数：</span>
        <span>61</span>
      </p>
      <button aria-label="适应窗口" className="ml-[66px] text-[#666]">
        <Svg w={20} h={20} sw={1.8}>
          <rect x="2" y="2" width="16" height="16" rx="1" />
          <path d="M6.500 6.500h7v7h-7z" />
          <path d="M4 5.500V4h1.500M14.500 4H16v1.500M4 14.500V16h1.500M14.500 16H16v-1.500" strokeWidth="1.200" />
        </Svg>
      </button>
      <button aria-label="全屏显示" className="ml-[23px] text-[#555]">
        <Svg w={20} h={20} sw={1.8}>
          <rect x="2" y="2" width="16" height="16" rx="1" />
          <path d="M5 8V5h3M5 5l3.500 3.500M12 5h3v3M15 5l-3.500 3.500M5 12v3h3M5 15l3.500-3.500M12 15h3v-3M15 15l-3.500-3.500" strokeWidth="1.400" />
        </Svg>
      </button>
      <button aria-label="缩小" onClick={() => setZoom(zoom - 10)} className="ml-[22px] text-[#777]">
        <Svg w={12} h={12} sw={1.2}>
          <path d="M0 6h12" />
        </Svg>
      </button>
      <input
        type="range"
        aria-label="缩放"
        min="20"
        max="350"
        value={zoom}
        onChange={(e) => setZoom(Number(e.target.value))}
        className="ml-[9px] h-4 w-[113px] appearance-none bg-transparent [&::-webkit-slider-runnable-track]:h-0.5 [&::-webkit-slider-runnable-track]:bg-[#999] [&::-webkit-slider-thumb]:-mt-[7px] [&::-webkit-slider-thumb]:h-4 [&::-webkit-slider-thumb]:w-[7px] [&::-webkit-slider-thumb]:appearance-none [&::-webkit-slider-thumb]:border [&::-webkit-slider-thumb]:border-[#666] [&::-webkit-slider-thumb]:bg-white"
      />
      <button aria-label="放大" onClick={() => setZoom(zoom + 10)} className="ml-1.5 text-[#777]">
        <Svg w={12} h={12} sw={1.2}>
          <path d="M0 6h12M6 0v12" />
        </Svg>
      </button>
      <button className="ml-4 flex w-[49px] items-center justify-between">
        {zoom}%
        <Caret className="text-[#777]" />
      </button>
      <button aria-label="适应选区" className="ml-5 text-[#666]">
        <Svg w={20} h={20} sw={1.8}>
          <path d="M1.500 6V1.500H6M14 1.500h4.500V6M1.500 14v4.500H6M14 18.500h4.500V14M6 6.500h8v7H6zM9 1.500h2M9 18.500h2" />
        </Svg>
      </button>
      <button aria-label="适应宽度" className="mr-[39px] ml-[23px] text-[#555]">
        <Svg w={20} h={20} sw={1.8}>
          <rect x="2" y="1.500" width="16" height="17" rx="1" />
          <path d="M5 10h10M7 8l-2 2 2 2M13 8l2 2-2 2" strokeWidth="1.400" />
        </Svg>
      </button>
      <Svg w={12} h={12} sw={2} className="absolute right-0 bottom-0 text-[#bbb]">
        <path d="M1 10h2M5 10h2M9 10h2M5 6h2M9 6h2M9 2h2" />
      </Svg>
    </footer>
  );
};

const App = () => {
  const [menu, setMenu] = useState("开始");

  return (
    <div className="flex h-screen flex-col overflow-hidden bg-white font-['Noto_Sans','Noto_Sans_CJK_SC',sans-serif]">
      <header className="shrink-0 bg-[#16ae78]">
        <TitleBar />
        <MenuBar active={menu} setActive={setMenu} />
        <Ribbon />
      </header>
      <div className="flex min-h-0 flex-1">
        <section className="flex min-w-0 flex-1 flex-col">
          <div className="flex h-[30px] shrink-0 border-b border-[#e0e0e0]">
            <DocTab title="高中政治经济生活" />
            <DocTab title="解析电商文案撰写全过程" active />
            <div className="ml-px w-px bg-[#d9d9d9]" />
          </div>
          <div className="flex min-h-0 flex-1">
            <MindMap />
            <div className="flex w-[11px] flex-col bg-[#f4f4f4] pt-[216px]">
              <div className="h-[124px] rounded-full bg-[#d2d2d2]" />
            </div>
            <div className="w-px" />
          </div>
          <div className="mr-3 h-[11px] shrink-0 bg-[#f4f4f4] pl-[224px]">
            <div className="h-full w-[310px] rounded-full bg-[#d2d2d2]" />
          </div>
        </section>
        <FormatPanel />
      </div>
      <StatusBar />
    </div>
  );
};

export default App;
